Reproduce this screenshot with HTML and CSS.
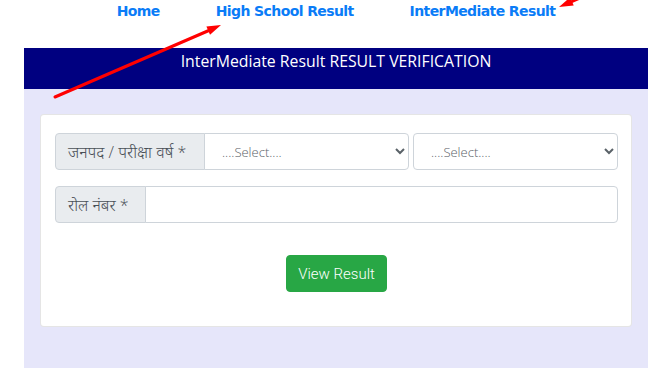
FILE: index.html
```html
<!DOCTYPE html>
<html lang="en">
<head>
    <meta charset="UTF-8">
    <meta name="viewport" content="width=device-width, initial-scale=1.0">
    <title>InterMediate Result Verification</title>
    <link rel="stylesheet" href="styles.css">
</head>
<body>
    <nav class="top-nav">
        <a href="#" class="nav-link">Home</a>
        <a href="#" class="nav-link">High School Result</a>
        <a href="#" class="nav-link">InterMediate Result</a>
    </nav>

    <div class="page">
        <div class="page-title">InterMediate Result RESULT VERIFICATION</div>

        <div class="card">
            <div class="form-row">
                <span class="input-label label-wide">जनपद / परीक्षा वर्ष *</span>
                <select class="form-select select-one">
                    <option>....Select....</option>
                </select>
                <select class="form-select select-two">
                    <option>....Select....</option>
                </select>
            </div>

            <div class="form-row">
                <span class="input-label label-short">रोल नंबर *</span>
                <input type="text" class="form-input">
            </div>

            <div class="actions">
                <button class="button">View Result</button>
            </div>
        </div>
    </div>

    <!-- Red arrows drawn over the page -->
    <svg class="arrows" width="661" height="376" viewBox="0 0 661 376">
        <line x1="55" y1="97" x2="210" y2="30" stroke="#ff0000" stroke-width="3" stroke-linecap="round"/>
        <polygon points="221,25 210,34.7 206.4,26.5" fill="#ff0000"/>
        <line x1="571" y1="2" x2="620" y2="-20" stroke="#ff0000" stroke-width="3"/>
        <polygon points="559,7 573.7,5.5 570.1,-2.7" fill="#ff0000"/>
    </svg>
</body>
</html>
```

FILE: styles.css
```css
body {
    margin: 0;
    font-family: 'Open Sans', 'Noto Sans', sans-serif;
    background-color: #fff;
    color: #495057;
    position: relative;
}

.top-nav {
    display: flex;
    justify-content: center;
    gap: 56px;
    width: 624px;
    margin-left: 24px;
    height: 48px;
    padding-top: 1px;
    box-sizing: border-box;
}
.nav-link {
    font-family: 'DejaVu Sans', sans-serif;
    font-weight: bold;
    font-size: 14px;
    color: #0a7cf7;
    text-decoration: none;
    line-height: 20px;
    letter-spacing: -0.6px;
}

.page {
    width: 624px;
    margin-left: 24px;
    background-color: #e6e6fa;
    padding-bottom: 41px;
}
.page-title {
    background-color: #000080;
    color: #fff;
    font-family: 'Open Sans', sans-serif;
    font-size: 15.8px;
    text-align: center;
    height: 41px;
    padding-top: 4px;
    box-sizing: border-box;
    line-height: 19px;
    margin-bottom: 25px;
}

.card {
    background-color: #fff;
    border: 1px solid rgba(0, 0, 0, 0.1);
    border-radius: 4px;
    margin: 0 16px;
    padding: 18px 13px 34px 14px;
}

.form-row {
    display: flex;
    height: 37px;
    margin-bottom: 16px;
}
.input-label {
    display: flex;
    align-items: center;
    box-sizing: border-box;
    padding: 0 12px;
    font-size: 16px;
    font-weight: 300;
    color: #495057;
    background-color: #e9ecef;
    border: 1px solid #ced4da;
    border-radius: 4px 0 0 4px;
    white-space: nowrap;
}
.label-wide {
    width: 150px;
}
.label-short {
    width: 91px;
}
.form-select,
.form-input {
    height: 37px;
    box-sizing: border-box;
    border: 1px solid #ced4da;
    background-color: #fff;
    font-family: 'Open Sans', sans-serif;
    font-size: 13px;
    font-weight: 300;
    color: #5a6268;
    padding: 0 8px 0 13px;
}
.select-one {
    width: 205px;
    margin-left: -1px;
    border-radius: 0 4px 4px 0;
    margin-right: 4px;
}
.select-two {
    flex: 1;
    border-radius: 4px;
}
.form-input {
    flex: 1;
    margin-left: -1px;
    border-radius: 0 4px 4px 0;
}

.actions {
    display: flex;
    justify-content: center;
    padding-top: 16px;
}
.button {
    background-color: #28a745;
    color: #fff;
    border: 1px solid #28a745;
    border-radius: 4px;
    font-family: 'Roboto', sans-serif;
    font-size: 15px;
    font-weight: 300;
    width: 101px;
    height: 37px;
    cursor: pointer;
}

.arrows {
    position: absolute;
    top: 0;
    left: 0;
    pointer-events: none;
}
```
